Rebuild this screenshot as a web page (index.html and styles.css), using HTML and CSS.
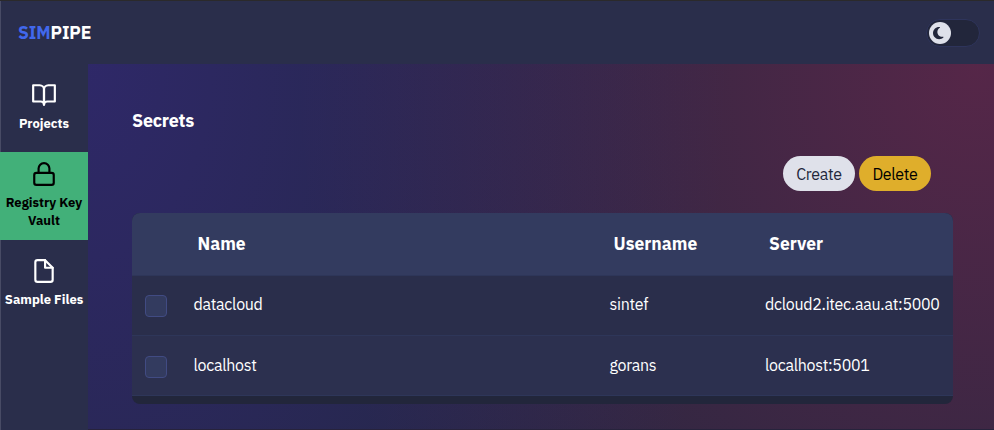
FILE: index.html
```html
<!DOCTYPE html>
<html lang="en">
<head>
<meta charset="utf-8">
<title>SIMPIPE</title>
<link rel="stylesheet" href="styles.css">
</head>
<body>
<div class="app">
  <header class="header">
    <div class="logo"><span class="logo-accent">SIM</span><span>PIPE</span></div>
    <div class="toggle" role="switch" aria-checked="true">
      <div class="thumb">
        <svg viewBox="0 0 512 512" width="14" height="14"><path fill="#22263b" d="M223.500 32C100 32 0 132.300 0 256S100 480 223.500 480c60.600 0 115.500-24.200 155.800-63.400c5-4.900 6.300-12.500 3.100-18.700s-10.100-9.700-17-8.500c-9.800 1.700-19.800 2.600-30.100 2.600c-96.900 0-175.500-78.800-175.500-176c0-65.800 36-123.100 89.300-153.300c6.100-3.500 9.200-10.500 7.700-17.300s-7.300-11.900-14.300-12.500c-6.300-.5-12.600-.8-19-.8z"/></svg>
      </div>
    </div>
  </header>
  <div class="body">
    <nav class="rail">
      <a class="tile">
        <svg class="icon" viewBox="0 0 24 24"><path d="M2 3h6a4 4 0 0 1 4 4v14a3 3 0 0 0-3-3H2z"/><path d="M22 3h-6a4 4 0 0 0-4 4v14a3 3 0 0 1 3-3h7z"/></svg>
        <span>Projects</span>
      </a>
      <a class="tile active">
        <svg class="icon" viewBox="0 0 24 24"><rect x="3" y="11" width="18" height="11" rx="2"/><path d="M7 11V7a5 5 0 0 1 10 0v4"/></svg>
        <span>Registry Key Vault</span>
      </a>
      <a class="tile">
        <svg class="icon" viewBox="0 0 24 24"><path d="M13 2H6a2 2 0 0 0-2 2v16a2 2 0 0 0 2 2h12a2 2 0 0 0 2-2V9z"/><path d="M13 2v7h7"/></svg>
        <span>Sample Files</span>
      </a>
    </nav>
    <main class="main">
      <h1 class="title">Secrets</h1>
      <div class="actions">
        <button class="btn create">Create</button>
        <button class="btn delete">Delete</button>
      </div>
      <div class="table">
        <div class="row head"><span></span><span>Name</span><span>Username</span><span>Server</span></div>
        <div class="row"><span class="check"></span><span>datacloud</span><span>sintef</span><span>dcloud2.itec.aau.at:5000</span></div>
        <div class="row even"><span class="check"></span><span>localhost</span><span>gorans</span><span>localhost:5001</span></div>
      </div>
    </main>
  </div>
</div>
</body>
</html>
```
FILE: styles.css
```css
* { box-sizing: border-box; }
body {
  margin: 0;
  font-family: "IBM Plex Sans", Roboto, sans-serif;
  font-size: 16px;
  line-height: 24px;
  color: #fff;
}
.app {
  height: 430px;
  overflow: hidden;
  display: flex;
  flex-direction: column;
  background: #2a2e4b;
  border-top: 1px solid #2b2a2b;
  box-shadow: inset 1px 0 #484b65;
}
.header {
  flex: none;
  height: 63px;
  padding: 0 14px 0 18px;
  display: flex;
  align-items: center;
  justify-content: space-between;
}
.logo {
  font-size: 17.500px;
  font-weight: 700;
  letter-spacing: -0.1px;
}
.logo-accent { color: #4168ec; }
.toggle {
  width: 54px;
  height: 28px;
  padding: 2px;
  border: 1px solid #2e345b;
  border-radius: 14px;
  background: #22263b;
}
.thumb {
  width: 22px;
  height: 22px;
  border-radius: 50%;
  background: #dfe1ea;
  display: flex;
  align-items: center;
  justify-content: center;
}
.body { flex: 1; display: flex; min-height: 0; }
.rail { width: 88px; flex: none; }
.tile {
  height: 88px;
  padding-bottom: 1px;
  display: flex;
  flex-direction: column;
  align-items: center;
  justify-content: center;
  gap: 7px;
  font-size: 13px;
  font-weight: 700;
  line-height: 18px;
  text-align: center;
}
.icon {
  width: 26px;
  height: 26px;
  fill: none;
  stroke: currentColor;
  stroke-width: 2;
  stroke-linecap: round;
  stroke-linejoin: round;
}
.active { background: #42b079; color: #000; }
.main {
  flex: 1;
  padding: 44px 41px 0 44px;
  border-bottom: 1px solid #27233c;
  background:
    radial-gradient(ellipse 640px 1000px at 0 0, rgba(65, 42, 165, .4), transparent),
    radial-gradient(ellipse 680px 800px at 98% 1%, rgba(190, 38, 91, .33), transparent),
    #22273f;
}
.title { margin: 0; font-size: 18px; line-height: 26px; font-weight: 700; letter-spacing: -0.28px; }
.actions {
  display: flex;
  justify-content: flex-end;
  gap: 4px;
  margin: 22px 22px 22px 0;
}
.btn {
  width: 72px;
  height: 35px;
  padding: 1px 0 0;
  border: 0;
  border-radius: 18px;
  font: inherit;
  letter-spacing: -0.3px;
}
.create { background: #dfe1ea; color: #22263b; }
.delete { background: #dfae2b; color: #000; }
.table {
  height: 191px;
  border-radius: 8px;
  overflow: hidden;
  background: #22263b;
}
.row {
  display: grid;
  grid-template-columns: 48.500px 416px 155.500px 1fr;
  align-items: center;
  height: 60px;
  padding: 0 0 3px 13px;
  background: #2a2e4b;
  border-bottom: 1px solid #2e3659;
  letter-spacing: -0.29px;
}
.even { padding-bottom: 1px; background: #2c304f; }
.head {
  height: 63px;
  padding: 0 0 0 17px;
  background: #333b5f;
  font-size: 17.500px;
  font-weight: 700;
  letter-spacing: 0;
}
.check {
  width: 22px;
  height: 22px;
  margin-top: 3px;
  border: 1px solid #414b83;
  border-radius: 4px;
  background: #333b5f;
}
```
